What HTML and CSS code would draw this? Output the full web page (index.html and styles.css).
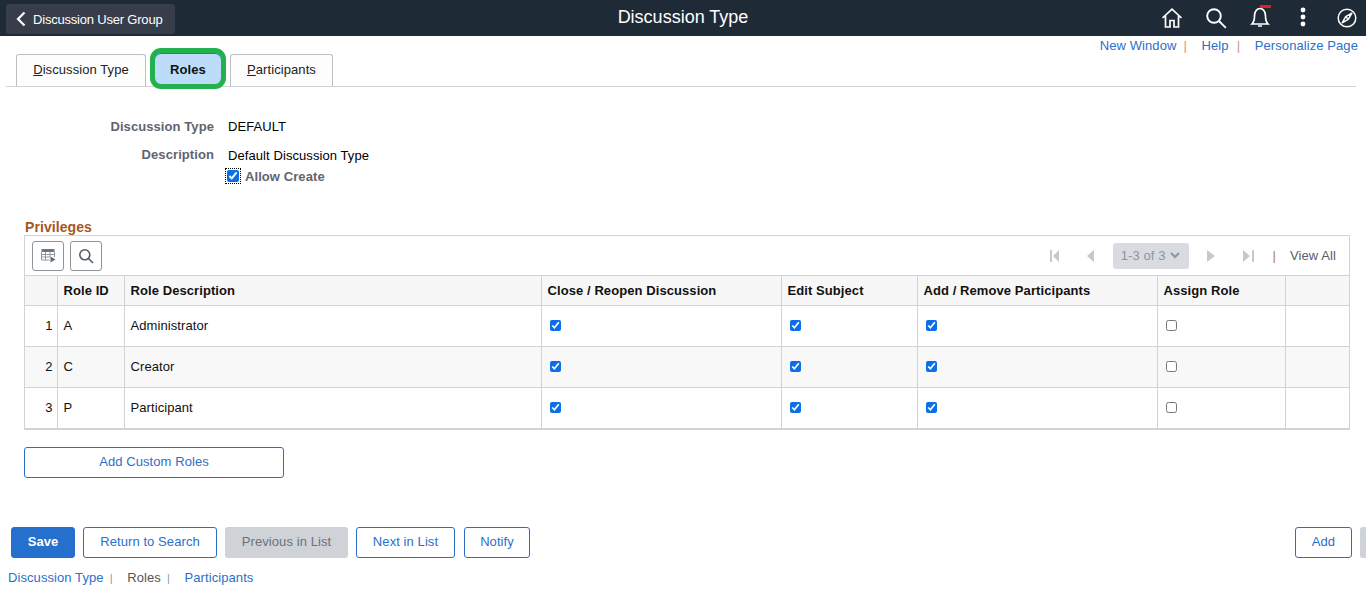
FILE: index.html
```html
<!DOCTYPE html>
<html lang="en">
<head>
<meta charset="utf-8">
<title>Discussion Type</title>
<link rel="stylesheet" href="styles.css">
</head>
<body>
<header class="banner">
  <div class="banner-left">
    <a class="back" href="#">
      <svg class="back-icon" width="10" height="16" viewBox="0 0 10 16"><path d="M8.5 1.5 2 8l6.5 6.5" fill="none" stroke="#fff" stroke-width="2.2"/></svg>
      <span>Discussion User Group</span>
    </a>
  </div>
  <h1 class="banner-title">Discussion Type</h1>
  <div class="banner-icons">
    <svg width="22" height="22" viewBox="0 0 22 22" fill="none" stroke="#fff" stroke-width="1.7"><path d="M1.5 11 11 2.2 20.500 11M4.500 9v11h4.500v-6.500h4V20h4.500V9"/></svg>
    <svg width="22" height="22" viewBox="0 0 22 22" fill="none" stroke="#fff" stroke-width="1.9"><circle cx="9" cy="9" r="6.800"/><path d="m14 14 6.800 6.800"/></svg>
    <svg class="bell" width="22" height="24" viewBox="0 0 22 24" fill="none" stroke="#fff" stroke-width="1.7"><path d="M3 20c2-2 2.500-4 2.500-8 0-4.500 2.500-7.500 5.500-7.500s5.500 3 5.500 7.500c0 4 .5 6 2.500 8zM9 22h4"/><path d="M11 2.500h11" stroke="#e0201c" stroke-width="3"/></svg>
    <svg class="dots" width="6" height="20" viewBox="0 0 6 20" fill="#fff"><circle cx="3" cy="3" r="2.400"/><circle cx="3" cy="10" r="2.400"/><circle cx="3" cy="17" r="2.400"/></svg>
    <svg class="compass" width="20" height="20" viewBox="0 0 20 20" fill="none" stroke="#fff" stroke-width="1.500"><circle cx="10" cy="10" r="8.800"/><path d="M14.800 5.200 11.300 11.300 8.700 8.700zM8.700 8.700 5.200 14.800 11.300 11.300" stroke-linejoin="round"/></svg>
  </div>
</header>

<nav class="top-links">
  <a href="#">New Window</a><span class="pipe pipe-first">|</span>
  <a href="#">Help</a><span class="pipe">|</span>
  <a href="#">Personalize Page</a>
</nav>

<div class="tabs">
  <a class="tab tab-type" href="#"><u>D</u>iscussion Type</a>
  <a class="tab tab-active" href="#">Roles</a>
  <a class="tab tab-part" href="#"><u>P</u>articipants</a>
</div>

<section class="fields">
  <div class="field field-type"><span class="label">Discussion Type</span><span class="value">DEFAULT</span></div>
  <div class="field field-desc"><span class="label">Description</span><span class="value">Default Discussion Type</span></div>
  <div class="field field-check"><span class="focus-box"><input type="checkbox" class="check-main" checked></span><span class="check-label">Allow Create</span></div>
</section>

<h2 class="section-title">Privileges</h2>
<section class="grid-wrap">
  <div class="toolbar">
    <button class="tool-btn" type="button" aria-label="Personalize">
      <svg width="15" height="14" viewBox="0 0 15 14" fill="none"><path d="M.5 0h13v3H.5z" fill="#6d7680"/><path d="M.5 3v8h8M13.500 3v5M.5 5.500h13M.5 8h8.500M4.500 3v8M9 3v5" stroke="#8f979f"/><path d="M9.500 7.500v6l5-3z" fill="#5f6b76"/></svg>
    </button>
    <button class="tool-btn" type="button" aria-label="Find">
      <svg width="16" height="16" viewBox="0 0 16 16" fill="none" stroke="#4f5b66" stroke-width="1.600"><circle cx="6.800" cy="6.800" r="5"/><path d="m10.500 10.500 4.500 4.500"/></svg>
    </button>
    <div class="pager">
      <svg width="9" height="14" viewBox="0 0 9 14" fill="#c4c9ce"><path d="M0 1h2v12H0zM9 1v12L3 7z"/></svg>
      <svg class="pg-prev" width="7" height="14" viewBox="0 0 7 14" fill="#c4c9ce"><path d="M7 1v12L0 7z"/></svg>
      <span class="pg-select">1-3 of 3 <svg width="10" height="7" viewBox="0 0 10 7" fill="none" stroke="#8d959d" stroke-width="2"><path d="m1 1 4 4 4-4"/></svg></span>
      <svg class="pg-next" width="8" height="14" viewBox="0 0 8 14" fill="#c4c9ce"><path d="M0 1v12l8-6z"/></svg>
      <svg class="pg-last" width="11" height="14" viewBox="0 0 11 14" fill="#c4c9ce"><path d="M0 1v12l7-6zM9 1h2v12H9z"/></svg>
      <span class="pg-pipe">|</span>
      <a class="pg-all" href="#">View All</a>
    </div>
  </div>
  <table class="grid">
    <colgroup>
      <col class="c-num"><col class="c-id"><col class="c-desc"><col class="c-close"><col class="c-edit"><col class="c-add"><col class="c-assign"><col>
    </colgroup>
    <thead>
      <tr><th></th><th>Role ID</th><th>Role Description</th><th>Close / Reopen Discussion</th><th>Edit Subject</th><th>Add / Remove Participants</th><th>Assign Role</th><th></th></tr>
    </thead>
    <tbody>
      <tr><td class="num">1</td><td>A</td><td>Administrator</td><td><input type="checkbox" class="cb" checked></td><td><input type="checkbox" class="cb" checked></td><td><input type="checkbox" class="cb" checked></td><td><input type="checkbox" class="cb"></td><td></td></tr>
      <tr class="alt"><td class="num">2</td><td>C</td><td>Creator</td><td><input type="checkbox" class="cb" checked></td><td><input type="checkbox" class="cb" checked></td><td><input type="checkbox" class="cb" checked></td><td><input type="checkbox" class="cb"></td><td></td></tr>
      <tr class="last"><td class="num">3</td><td>P</td><td>Participant</td><td><input type="checkbox" class="cb" checked></td><td><input type="checkbox" class="cb" checked></td><td><input type="checkbox" class="cb" checked></td><td><input type="checkbox" class="cb"></td><td></td></tr>
    </tbody>
  </table>
</section>

<div class="custom-row"><a class="btn btn-custom" href="#">Add Custom Roles</a></div>

<div class="actions">
  <a class="btn btn-primary btn-save" href="#">Save</a>
  <a class="btn btn-return" href="#">Return to Search</a>
  <a class="btn btn-disabled btn-prev" href="#">Previous in List</a>
  <a class="btn btn-next" href="#">Next in List</a>
  <a class="btn btn-notify" href="#">Notify</a>
  <span class="spacer"></span>
  <a class="btn btn-add" href="#">Add</a>
  <span class="btn-disabled btn-stub"></span>
</div>

<nav class="bottom-links">
  <a href="#">Discussion Type</a><span class="pipe-sm">|</span>
  <span class="current">Roles</span><span class="pipe-sm">|</span>
  <a href="#">Participants</a>
</nav>
</body>
</html>
```
FILE: styles.css
```css
* { box-sizing: border-box; }
html, body { margin: 0; padding: 0; height: 589px; overflow: hidden; }
body { font-family: "Liberation Sans", Arial, sans-serif; font-size: 13px; letter-spacing: 0.08px; color: #000; background: #fff; }
a { text-decoration: none; color: #2b70c9; }

.banner { height: 36px; background: #1f2a37; display: grid; grid-template-columns: 1fr auto 1fr; align-items: center; }
.banner-left { padding-left: 6px; }
.back { display: inline-flex; align-items: center; height: 30px; margin-top: 2px; width: 169px; padding-left: 10px; background: #373e4a; border-radius: 3px; color: #fff; letter-spacing: -0.2px; }
.back-icon { margin-right: 7px; }
.banner-title { margin: 0; padding-bottom: 2px; font-size: 18px; font-weight: 400; color: #fff; letter-spacing: 0; }
.banner-icons { display: flex; justify-content: flex-end; align-items: center; padding-right: 9px; }
.banner-icons svg { display: block; }
.banner-icons svg:nth-child(1) { margin-right: 22px; }
.banner-icons svg:nth-child(2) { margin-right: 22px; }
.banner-icons .bell { margin-right: 29px; margin-bottom: 4px; }
.banner-icons .dots { margin-right: 31px; margin-bottom: 2px; }
.banner-icons .compass { margin-bottom: 1px; }

.top-links { height: 18px; padding-top: 2px; padding-right: 8px; text-align: right; line-height: 16px; white-space: nowrap; }
.pipe { margin: 0 11px 0 8px; color: #c79a7c; }
.pipe-first { margin-left: 7px; }

.tabs { display: flex; align-items: flex-start; height: 33px; margin: 0 10px 0 6px; padding-left: 10px; border-bottom: 1px solid #d0d3d8; }
.tab { height: 32px; padding-bottom: 2px; display: flex; align-items: center; justify-content: center; background: #fdfdfd; border: 1px solid #bcc0c5; border-bottom: 0; border-radius: 3px 3px 0 0; color: #222; }
.tab-type { width: 130px; }
.tab-active { width: 76px; height: 41px; margin: -6px 4px 0 4px; padding: 1px 0 0; background: #bcdcfa; border: 5px solid #22b14c; border-radius: 11px; box-shadow: inset 0 1px 0 #2470cc; font-weight: 700; color: #111; }
.tab-part { width: 103px; }

.fields { height: 133px; padding-top: 32px; }
.field { display: flex; }
.label { width: 214px; text-align: right; color: #5f6470; font-weight: 700; }
.value { margin-left: 14px; color: #000; font-weight: 400; }
.field-type { height: 28px; }
.field-desc { height: 21px; }
.field-desc .value { margin-top: 1px; }
.field-check { padding-left: 226px; align-items: center; height: 16px; }
.focus-box { display: block; width: 14px; height: 14px; outline: 1px dotted #000; margin-right: 5px; }
.check-main { display: block; width: 12px; height: 12px; margin: 1px; accent-color: #0b6fe8; }
.check-label { color: #5f6470; font-weight: 700; }

.section-title { margin: 0 0 0 25px; height: 15px; line-height: 15px; font-size: 14px; color: #a5581a; font-weight: 700; }

.grid-wrap { margin: 0 16px 0 24px; border: 1px solid #d0d3d8; border-bottom: 2px solid #d0d3d8; }
.toolbar { height: 39px; display: flex; align-items: center; padding: 1px 0 0 7px; }
.tool-btn { width: 32px; height: 30px; margin-right: 6px; padding: 0; background: #fff; border: 1px solid #8f949a; border-radius: 3px; display: flex; align-items: center; justify-content: center; }
.pager { margin-left: auto; display: flex; align-items: center; padding-right: 13px; color: #8d959d; }
.pg-prev { margin-left: 28px; }
.pg-select { margin-left: 19px; width: 76px; height: 26px; padding-bottom: 2px; background: #d8dbdf; border-radius: 3px; display: flex; align-items: center; justify-content: center; gap: 5px; }
.pg-next { margin-left: 18px; }
.pg-last { margin-left: 28px; }
.pg-pipe { margin: 0 0 2px 19px; color: #b9764e; }
.pg-all { margin: 0 0 2px 14px; color: #55606b; }

.grid { width: 100%; table-layout: fixed; border-collapse: collapse; }
.c-num { width: 32px; }
.c-id { width: 67px; }
.c-desc { width: 417px; }
.c-close { width: 240px; }
.c-edit { width: 136px; }
.c-add { width: 240px; }
.c-assign { width: 128px; }
.grid th, .grid td { border: 1px solid #d0d3d8; padding: 0 5px 0 6px; text-align: left; overflow: hidden; white-space: nowrap; }
.grid tr > :first-child { border-left: 0; }
.grid tr > :last-child { border-right: 0; }
.grid th { height: 30px; background: #f7f7f7; font-weight: 700; color: #111; }
.grid td { height: 41px; padding-bottom: 2px; color: #111; }
.grid .last td { border-bottom: 0; height: 40px; padding-bottom: 0; }
.grid .alt td { background: #f8f8f8; }
.grid td.num { text-align: right; padding-right: 4px; }
.cb { display: block; width: 11px; height: 11px; margin: 0 0 0 2px; accent-color: #0b6fe8; }

.custom-row { padding: 17px 0 0 24px; }
.btn { display: flex; align-items: center; justify-content: center; height: 31px; padding-bottom: 2px; background: #fff; border: 1px solid #2a6fc4; border-radius: 3px; color: #2b70c9; }
.btn-custom { width: 260px; }

.actions { display: flex; margin-top: 49px; padding-left: 11px; }
.btn-save { width: 64px; margin-right: 8px; }
.btn-primary { background: #2470cc; color: #fff; border-color: #2470cc; font-weight: 700; }
.btn-return { width: 134px; margin-right: 8px; }
.btn-disabled { background: #cfd3d8; border: 0; border-radius: 3px; color: #6c7178; }
.btn-prev { width: 123px; margin-right: 8px; }
.btn-next { width: 99px; margin-right: 9px; }
.btn-notify { width: 66px; }
.spacer { flex: 1; }
.btn-add { width: 57px; margin-right: 8px; }
.btn-stub { display: block; width: 6px; height: 31px; border-radius: 3px 0 0 3px; }

.bottom-links { padding: 12px 0 0 8px; line-height: 16px; white-space: nowrap; }
.current { color: #555; }
.pipe-sm { margin: 0 11px 0 6px; font-size: 11px; color: #8d959d; }
```
